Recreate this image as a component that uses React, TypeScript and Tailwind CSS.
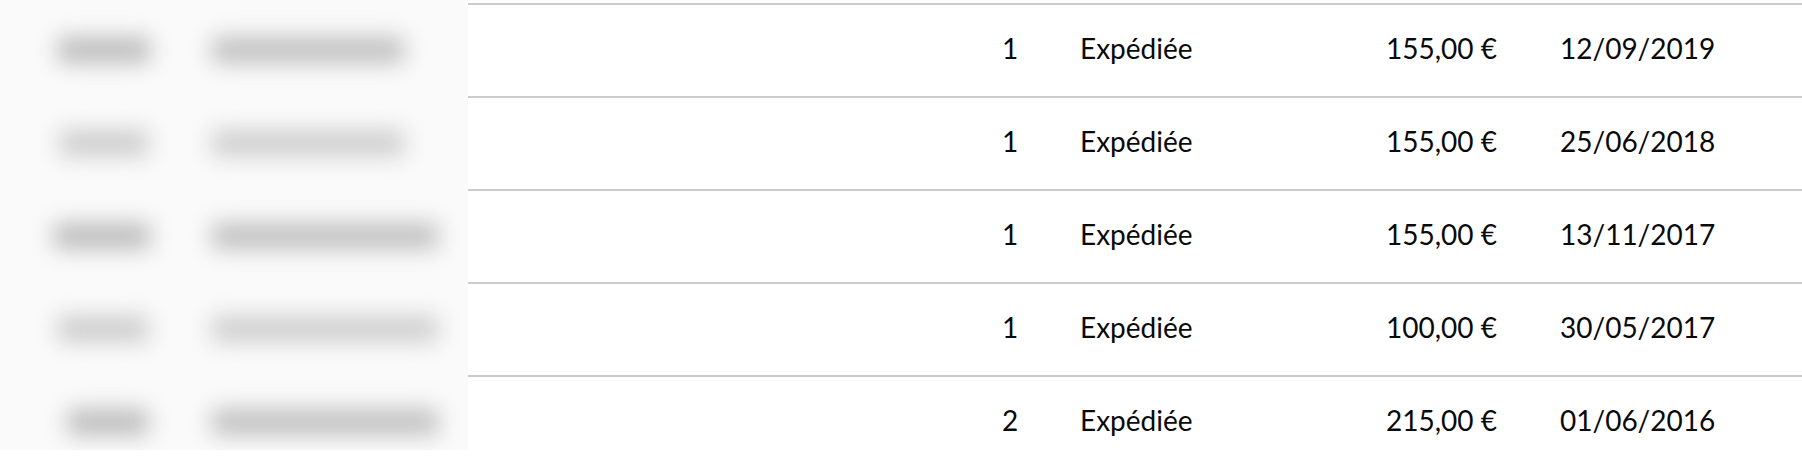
import clsx from "clsx";

type Order = {
  qty: number;
  status: string;
  total: string;
  date: string;
  // left offset / widths of the blurred ref + product blocks
  refX: number;
  refW: number;
  nameW: number;
  faint?: boolean;
};

const orders: Order[] = [
  { qty: 1, status: "Expédiée", total: "155,00 €", date: "12/09/2019", refX: 58, refW: 92, nameW: 192 },
  { qty: 1, status: "Expédiée", total: "155,00 €", date: "25/06/2018", refX: 60, refW: 88, nameW: 192, faint: true },
  { qty: 1, status: "Expédiée", total: "155,00 €", date: "13/11/2017", refX: 54, refW: 96, nameW: 226 },
  { qty: 1, status: "Expédiée", total: "100,00 €", date: "30/05/2017", refX: 58, refW: 90, nameW: 226, faint: true },
  { qty: 2, status: "Expédiée", total: "215,00 €", date: "01/06/2016", refX: 68, refW: 80, nameW: 226 },
];

const BlurredCells = ({ order }: { order: Order }) => (
  <div className="flex h-[93px] items-center">
    <div className="w-[212px] shrink-0">
      <div
        className={clsx(
          "h-[26px] blur-[11px]",
          order.faint ? "bg-[#cccccc]" : "bg-[#bcbcbc]"
        )}
        style={{ marginLeft: order.refX, width: order.refW }}
      />
    </div>
    <div
      className={clsx(
        "h-[26px] blur-[11px]",
        order.faint ? "bg-[#cecece]" : "bg-[#c0c0c0]"
      )}
      style={{ width: order.nameW }}
    />
  </div>
);

const OrderRow = ({ order }: { order: Order }) => (
  <div className="flex h-[93px] items-center border-t-2 border-[#cccccc] pb-[5px] text-[28px] leading-none text-[#0a0a0a]">
    <div className="w-[492px] shrink-0" />
    <div className="w-[100px] text-center">{order.qty}</div>
    <div className="ml-[20px] w-[280px]">{order.status}</div>
    <div className="w-[137px] text-right">{order.total}</div>
    <div className="ml-[63px]">{order.date}</div>
  </div>
);

export default function App() {
  return (
    <div
      className="flex h-[458px] w-[1802px] overflow-hidden bg-white"
      style={{ fontFamily: "Lato, 'Liberation Sans', sans-serif" }}
    >
      {/* privacy-blurred ref + product columns */}
      <div className="h-[450px] w-[468px] shrink-0 overflow-hidden bg-[#fafafa] pt-[3px]">
        {orders.map((o, i) => (
          <BlurredCells key={i} order={o} />
        ))}
      </div>

      <div className="flex-1 pt-[3px]">
        {orders.map((o, i) => (
          <OrderRow key={i} order={o} />
        ))}
      </div>
    </div>
  );
}
